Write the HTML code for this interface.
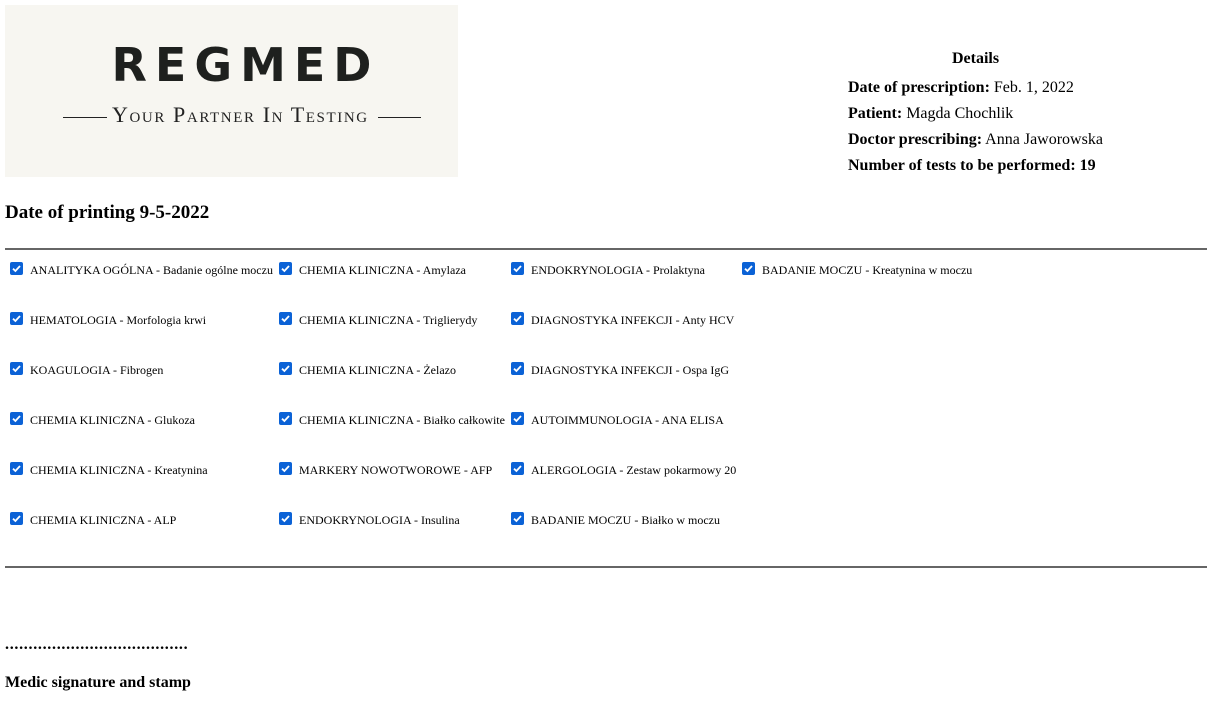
<!DOCTYPE html>
<html><head><meta charset="utf-8"><style>
body{margin:0;width:1207px;height:706px;background:#fff;font-family:"Liberation Serif",serif;color:#000;position:relative;overflow:hidden}
.a{position:absolute;white-space:nowrap}
.logo{left:5px;top:5px;width:453px;height:172px;background:#f7f6f1}
.cb{position:absolute;width:13px;height:13px;background:#0b62d6;border-radius:2px}
.cb svg{position:absolute;left:0;top:0}
.t{position:absolute;font-size:12px;line-height:14px;white-space:nowrap}
.hr{position:absolute;left:5px;width:1202px;height:2px;background:#666}
.d{font-size:16px;line-height:20px}
</style></head><body>
<div class="a logo">
 <div class="a" style="left:10px;width:453px;top:32px;text-align:center;font-family:'DejaVu Sans','Liberation Sans',sans-serif;font-size:46px;letter-spacing:8px;color:#1e201e;font-weight:600;line-height:56px;text-indent:8px">REGMED</div>
 <div class="a" style="left:58px;top:112px;width:44px;height:1px;background:#222"></div>
 <div class="a" style="left:107px;top:98px;font-size:22px;color:#222;font-variant:small-caps;letter-spacing:1.6px;line-height:24px">Your Partner In Testing</div>
 <div class="a" style="left:373px;top:112px;width:43px;height:1px;background:#222"></div>
</div>
<div class="a d" style="left:952px;top:49px;font-weight:bold">Details</div>
<div class="a d" style="left:848px;top:78px"><b>Date of prescription:</b> Feb. 1, 2022</div>
<div class="a d" style="left:848px;top:104px"><b>Patient:</b> Magda Chochlik</div>
<div class="a d" style="left:848px;top:130px"><b>Doctor prescribing:</b> Anna Jaworowska</div>
<div class="a d" style="left:848px;top:156px"><b>Number of tests to be performed: 19</b></div>
<div class="a" style="left:5px;top:202px;font-size:19px;font-weight:bold;line-height:22px">Date of printing 9-5-2022</div>
<div class="hr" style="top:248px"></div>
<div class="hr" style="top:566px"></div>
<div id="g"></div>
<div class="a" style="left:5px;top:636px;font-size:16px;font-weight:bold;letter-spacing:0.7px">.......................................</div>
<div class="a" style="left:5px;top:673px;font-size:16px;font-weight:bold;line-height:20px">Medic signature and stamp</div>
<script>
var cols=[10,279,511,742];
var data=[
["ANALITYKA OGÓLNA - Badanie ogólne moczu","HEMATOLOGIA - Morfologia krwi","KOAGULOGIA - Fibrogen","CHEMIA KLINICZNA - Glukoza","CHEMIA KLINICZNA - Kreatynina","CHEMIA KLINICZNA - ALP"],
["CHEMIA KLINICZNA - Amylaza","CHEMIA KLINICZNA - Triglierydy","CHEMIA KLINICZNA - Żelazo","CHEMIA KLINICZNA - Białko całkowite","MARKERY NOWOTWOROWE - AFP","ENDOKRYNOLOGIA - Insulina"],
["ENDOKRYNOLOGIA - Prolaktyna","DIAGNOSTYKA INFEKCJI - Anty HCV","DIAGNOSTYKA INFEKCJI - Ospa IgG","AUTOIMMUNOLOGIA - ANA ELISA","ALERGOLOGIA - Zestaw pokarmowy 20","BADANIE MOCZU - Białko w moczu"],
["BADANIE MOCZU - Kreatynina w moczu"]];
var h="";
data.forEach(function(c,i){c.forEach(function(s,j){var y=262+j*50;
h+='<div class="cb" style="left:'+cols[i]+'px;top:'+y+'px"><svg width="13" height="13" viewBox="0 0 13 13"><path d="M3 6.7L5.4 9L10 4" fill="none" stroke="#fff" stroke-width="1.8"/></svg></div>';
h+='<div class="t" style="left:'+(cols[i]+20)+'px;top:'+(y+1)+'px">'+s+'</div>';});});
document.getElementById("g").innerHTML=h;
</script>
</body></html>
